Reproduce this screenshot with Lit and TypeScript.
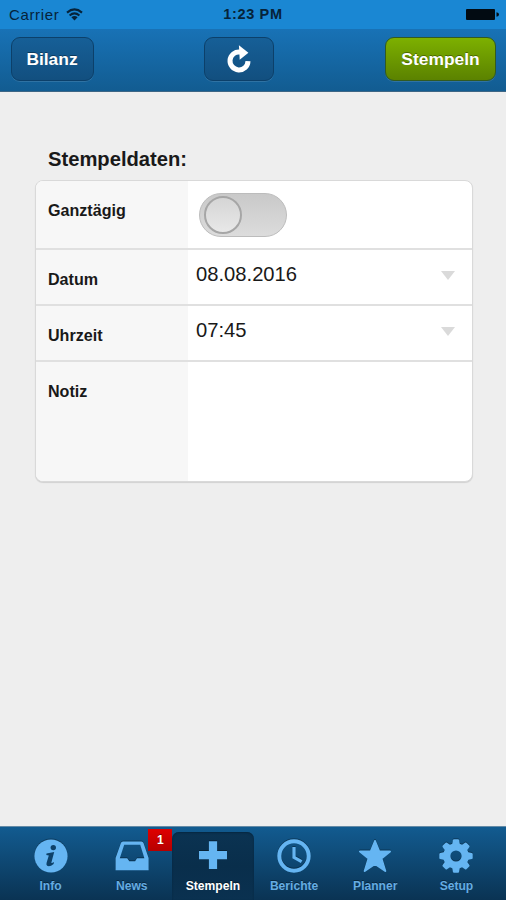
import { LitElement, html, css, svg } from "lit";
import { customElement } from "lit/decorators.js";

const gearTeeth = [0, 45, 90, 135, 180, 225, 270, 315];

const icons: Record<string, unknown> = {
  info: svg`<circle cx="17" cy="17" r="16.6" fill="#65b5f2"/>
    <circle cx="19.3" cy="8.6" r="2.7" fill="#0d4169"/>
    <path d="M12.5 14.5 L20.2 13.1 L17.4 23.4 Q17.2 24.8 20 22.9 L19.6 25 Q15.8 28.2 13.1 26.8 Q12 26 12.6 23.8 L14.8 16.4 L12.3 16.1Z" fill="#0d4169"/>`,
  news: svg`<path fill-rule="evenodd" fill="#65b5f2" d="M8 2.4H26.4Q28 2.4 28.5 4L33.6 19V31.3H.6V19L5.9 4Q6.4 2.4 8 2.4ZM9.2 5.8L4.8 19.2H12.2L14.3 22.2H20.1L22 19.2H29.4L25.2 5.8Z"/>`,
  plus: svg`<path fill="#65b5f2" d="M12.9 2.3H21.1V12H31V20.3H21.1V30H12.9V20.3H3V12H12.9Z"/>`,
  clock: svg`<circle cx="17" cy="17" r="14.7" fill="none" stroke="#65b5f2" stroke-width="4"/>
    <path d="M17 8V18.3L24.6 22.6" fill="none" stroke="#65b5f2" stroke-width="3.2"/>`,
  star: svg`<path fill="#65b5f2" stroke="#65b5f2" stroke-width="2" stroke-linejoin="round" d="M17 2L21.2 12.4H32L23.4 19.4L27.3 32L17 25L6.7 32L10.6 19.4L2 12.4H12.8Z"/>`,
  gear: svg`<circle cx="17" cy="17" r="9.2" fill="none" stroke="#65b5f2" stroke-width="7.2"/>
    ${gearTeeth.map(
      (a) => svg`<path transform="rotate(${a} 17 17)" fill="#65b5f2" d="M13.1 6L13.9 1.2Q14.1 .3 15 .3H19Q19.9 .3 20.1 1.2L20.9 6Z"/>`
    )}`,
};

const tabs = [
  { label: "Info", icon: "info" },
  { label: "News", icon: "news", badge: "1" },
  { label: "Stempeln", icon: "plus", active: true },
  { label: "Berichte", icon: "clock" },
  { label: "Planner", icon: "star" },
  { label: "Setup", icon: "gear" },
];

@customElement("app-root")
export class AppRoot extends LitElement {
  static styles = css`
    :host {
      display: flex;
      flex-direction: column;
      height: 900px;
      background: #eee;
      color: #191919;
      font-family: "Liberation Sans", Arial, sans-serif;
      overflow: hidden;
    }
    * { box-sizing: border-box; }
    svg { display: block; }
    .status {
      height: 29px;
      flex: none;
      display: grid;
      grid-template-columns: 1fr auto 1fr;
      align-items: center;
      padding: 0 7px 0 9px;
      background: #1a87d3;
      color: #06233a;
      font-size: 15px;
      line-height: 29px;
    }
    .carrier { display: flex; align-items: center; gap: 7px; letter-spacing: .65px; }
    .time { font-weight: bold; font-size: 14.5px; letter-spacing: .65px; margin-right: 2px; }
    .battery { justify-self: end; }
    .header {
      height: 63px;
      flex: none;
      display: flex;
      justify-content: space-between;
      padding: 8px 10px 0 11px;
      background: linear-gradient(#1872b6, #125c91);
      border-bottom: 1px solid #3d6685;
    }
    .btn {
      height: 44px;
      display: flex;
      align-items: center;
      justify-content: center;
      border: 1.5px solid #0c406a;
      border-radius: 9px;
      background: linear-gradient(#165f97, #124f7f);
      box-shadow: 0 1px 0 rgba(255, 255, 255, .12);
      color: #fff;
      font-weight: bold;
      font-size: 17.4px;
      text-shadow: 0 -1px 0 rgba(0, 0, 0, .35);
    }
    .back { width: 83px; padding-right: 1px; }
    .refresh { width: 70px; margin-right: 1px; }
    .submit {
      width: 111px;
      border-color: #315a22;
      background: linear-gradient(#7db000, #5b8200);
    }
    .body { flex: 1; padding: 53px 33px 0 35px; }
    .title { margin: 0 0 0 13px; font-size: 20.2px; line-height: 28px; height: 35px; font-weight: bold; }
    .card {
      border: 1px solid #d9d9d9;
      border-radius: 8px;
      background: #fff;
      overflow: hidden;
      box-shadow: 0 1px 1px rgba(0, 0, 0, .12);
      height: 302px;
    }
    .row { display: flex; height: 56px; border-bottom: 2px solid #e0e0e0; }
    .row.first { height: 69px; }
    .row.last { height: 120px; border-bottom: 0; }
    .label {
      width: 152px;
      background: #f7f7f7;
      padding: 19px 0 0 12px;
      font-size: 16.1px;
      line-height: 20px;
      font-weight: bold;
    }
    .value {
      flex: 1;
      display: flex;
      justify-content: space-between;
      padding: 12px 17px 0 8px;
      font-size: 20.2px;
      line-height: 25px;
    }
    .first .value { padding: 12px 0 0 11px; }
    .arrow {
      width: 14px;
      height: 9px;
      margin-top: 9px;
      background: #dadada;
      clip-path: polygon(0 0, 100% 0, 50% 100%);
    }
    .switch {
      width: 88px;
      height: 44px;
      border: 1.5px solid #bcbcbc;
      border-radius: 22px;
      padding: 2px 4px;
      background: linear-gradient(#c9c9c9, #dcdcdc);
    }
    .knob {
      width: 38px;
      height: 38px;
      border: 2px solid #a6a6a6;
      border-radius: 50%;
      background: linear-gradient(#d5d5d5, #e8e8e8);
    }
    .tabs {
      height: 74px;
      flex: none;
      display: flex;
      padding: 5px 9px 0 10px;
      border-top: 1px solid #648aa6;
      background: linear-gradient(#125b90, #0a3353);
    }
    .tab {
      position: relative;
      flex: 1;
      display: flex;
      flex-direction: column;
      align-items: center;
      padding-top: 7px;
      border-radius: 7px 7px 0 0;
      color: #65ace2;
      font-size: 12.1px;
      font-weight: bold;
      line-height: 16px;
      text-shadow: 0 -1px 0 rgba(0, 0, 0, .4);
    }
    .tab svg { margin-bottom: 5px; filter: drop-shadow(0 -1px 0 rgba(0, 0, 0, .3)); }
    .tab.active {
      color: #fff;
      background: linear-gradient(#0b3352, #092e4b 50%, #0a3150);
      box-shadow: inset 0 1px 2px #062740;
    }
    .badge {
      position: absolute;
      top: -3px;
      right: 0;
      width: 24px;
      height: 22px;
      background: linear-gradient(#df0000, #b60000);
      color: #fff;
      line-height: 22px;
      text-align: center;
    }
  `;

  render() {
    return html`
      <div class="status">
        <div class="carrier">
          <span>Carrier</span>
          <svg width="17" height="13" viewBox="0 0 17 13" fill="none" stroke="#06233a" stroke-width="2.1">
            <path d="M1 4.6Q8.5 -1.8 16 4.6M3.6 7.5Q8.5 3.4 13.4 7.5" />
            <path d="M5.4 9.2Q8.5 6.9 11.6 9.2L8.5 12.6Z" fill="#06233a" stroke="none" />
          </svg>
        </div>
        <div class="time">1:23 PM</div>
        <svg class="battery" width="33" height="11" viewBox="0 0 33 11">
          <rect width="29" height="11" rx="1" fill="#020b12" />
          <path d="M30.5 3.3Q33 3.5 33 5.5T30.5 7.7Z" fill="#020b12" />
        </svg>
      </div>
      <div class="header">
        <div class="btn back">Bilanz</div>
        <div class="btn refresh">
          <svg width="26" height="28" viewBox="0 0 26 28">
            <path d="M14.2 7A9 9 0 1 0 22 16.2" fill="none" stroke="#fff" stroke-width="5" />
            <path d="M12.9 .3L22.4 7.7L13.7 14.8Z" fill="#fff" />
          </svg>
        </div>
        <div class="btn submit">Stempeln</div>
      </div>
      <div class="body">
        <h1 class="title">Stempeldaten:</h1>
        <div class="card">
          <div class="row first">
            <div class="label">Ganztägig</div>
            <div class="value"><div class="switch"><div class="knob"></div></div></div>
          </div>
          <div class="row">
            <div class="label">Datum</div>
            <div class="value"><span>08.08.2016</span><i class="arrow"></i></div>
          </div>
          <div class="row">
            <div class="label">Uhrzeit</div>
            <div class="value"><span>07:45</span><i class="arrow"></i></div>
          </div>
          <div class="row last">
            <div class="label">Notiz</div>
            <div class="value"></div>
          </div>
        </div>
      </div>
      <div class="tabs">
        ${tabs.map(
          (t) => html`<div class="tab ${t.active ? "active" : ""}">
            <svg width="34" height="34" viewBox="0 0 34 34">${icons[t.icon]}</svg>
            <span>${t.label}</span>
            ${t.badge ? html`<span class="badge">${t.badge}</span>` : ""}
          </div>`
        )}
      </div>
    `;
  }
}
